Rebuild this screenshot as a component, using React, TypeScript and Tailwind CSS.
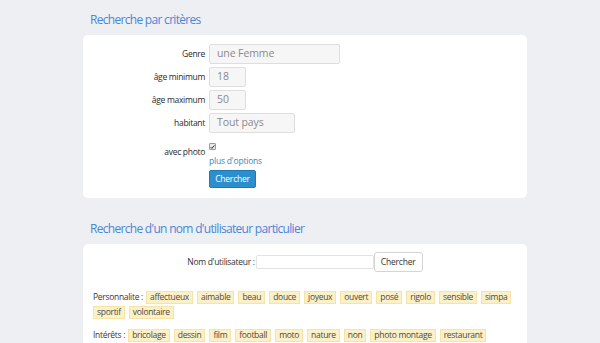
import React from "react";

const personnalite = [
  "affectueux",
  "aimable",
  "beau",
  "douce",
  "joyeux",
  "ouvert",
  "posé",
  "rigolo",
  "sensible",
  "simpa",
  "sportif",
  "volontaire",
];

const interets = [
  "bricolage",
  "dessin",
  "film",
  "football",
  "moto",
  "nature",
  "non",
  "photo montage",
  "restaurant",
];

function Tag({ label }: { label: string }) {
  return (
    <span className="h-[13px] px-[3px] flex items-center bg-[#fcf0c6] border border-[#f8e3a6] text-[8.5px] tracking-[-0.3px] text-[#4a4a4a]">
      {label}
    </span>
  );
}

function TagGroup({ title, tags }: { title: string; tags: string[] }) {
  return (
    <div className="flex flex-wrap items-center gap-x-[4px] gap-y-[2px]">
      <span className="text-[8.5px] tracking-[-0.3px] text-[#3d3444] mr-[-1px]">{title}</span>
      {tags.map((t) => (
        <Tag key={t} label={t} />
      ))}
    </div>
  );
}

function Row({ label, children }: { label: string; children: React.ReactNode }) {
  return (
    <div className="flex items-center h-[20px]">
      <div className="w-[122px] text-right text-[8.5px] tracking-[-0.3px] text-[#2a2a2a]">{label}</div>
      <div className="ml-[4px]">{children}</div>
    </div>
  );
}

function Field({ value, width }: { value: string; width: string }) {
  return (
    <div
      className={`${width} h-[20px] flex items-center px-[7px] bg-[#f6f6f6] border border-[#dedede] rounded-[2px] text-[10.5px] tracking-[-0.1px] text-[#8a8a8a]`}
    >
      {value}
    </div>
  );
}

export default function App() {
  return (
    <div className="min-h-screen bg-[#eeeff3] font-['Open_Sans',sans-serif]">
      <div className="ml-[83px] w-[444px]">
        <h2 className="h-[35px] flex items-center pl-[7px] pt-[4px] text-[12px] tracking-[-0.7px] text-[#4a86d6]">
          Recherche par critères
        </h2>
        <div className="bg-white rounded-[5px] pt-[9px] pb-[10px]">
          <div className="flex flex-col gap-[3px]">
            <Row label="Genre">
              <Field value="une Femme" width="w-[131px]" />
            </Row>
            <Row label="âge minimum">
              <Field value="18" width="w-[37px]" />
            </Row>
            <Row label="âge maximum">
              <Field value="50" width="w-[37px]" />
            </Row>
            <Row label="habitant">
              <Field value="Tout pays" width="w-[86px]" />
            </Row>
          </div>
          <div className="flex mt-[10px]">
            <div className="w-[122px] text-right text-[8.5px] tracking-[-0.3px] text-[#2a2a2a] pt-[3px]">avec photo</div>
            <div className="ml-[4px] flex flex-col items-start">
              <span className="w-[7px] h-[7px] border border-[#9a9a9a] bg-[#e9e9e9] rounded-[1px] flex items-center justify-center">
                <svg viewBox="0 0 8 8" className="w-[6px] h-[6px]">
                  <path d="M1 4.2 L3 6.2 L7 1.5" fill="none" stroke="#222" strokeWidth="1.5" />
                </svg>
              </span>
              <span className="mt-[6px] text-[8.5px] tracking-[-0.2px] text-[#3a87c0] leading-[10px]">plus d'options</span>
              <button className="mt-[4px] w-[47px] h-[18px] bg-[#2c8fcd] border border-[#2478b0] rounded-[2px] text-[8.5px] tracking-[-0.2px] text-white">
                Chercher
              </button>
            </div>
          </div>
        </div>

        <h2 className="h-[46px] flex items-end pl-[7px] pb-[6px] text-[12px] tracking-[-0.7px] text-[#4a86d6]">
          Recherche d'un nom d'utilisateur particulier
        </h2>
        <div className="bg-white rounded-t-[5px] pt-[8px] px-[10px] pb-[10px]">
          <div className="flex items-center justify-center">
            <span className="text-[8.5px] tracking-[-0.3px] text-[#333] mr-[1px]">Nom d'utilisateur :</span>
            <span className="w-[118px] h-[14px] border border-[#e2e2e2] rounded-[2px] bg-white" />
            <button className="w-[49px] h-[20px] border border-[#d4d4d4] rounded-[3px] bg-white text-[8.5px] tracking-[-0.2px] text-[#333]">
              Chercher
            </button>
          </div>
          <div className="mt-[19px] flex flex-col gap-[10px]">
            <TagGroup title="Personnalite :" tags={personnalite} />
            <TagGroup title="Intérêts :" tags={interets} />
          </div>
        </div>
      </div>
    </div>
  );
}
